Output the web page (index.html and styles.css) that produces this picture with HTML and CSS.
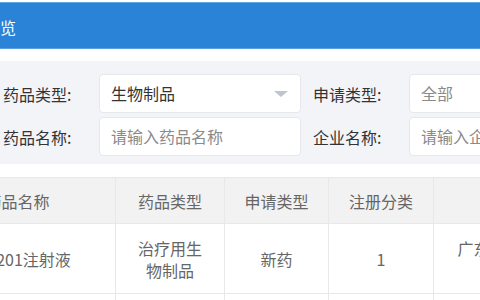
FILE: index.html
```html
<!DOCTYPE html>
<html lang="zh">

<head>
    <meta charset="UTF-8">
    <title>药品一览</title>
    <link rel="stylesheet" href="styles.css">
</head>

<body>
    <div class="topbar">
        <h1 class="title">药品一览</h1>
    </div>

    <div class="filters">
        <div class="field">
            <span class="label">药品类型:</span>
            <div class="input select">生物制品<i class="caret"></i></div>
        </div>
        <div class="field">
            <span class="label">申请类型:</span>
            <div class="input muted">全部</div>
        </div>
        <div class="field">
            <span class="label">药品名称:</span>
            <div class="input muted">请输入药品名称</div>
        </div>
        <div class="field">
            <span class="label">企业名称:</span>
            <div class="input muted">请输入企业名称</div>
        </div>
    </div>

    <table class="list">
        <colgroup>
            <col width="196">
            <col width="109">
            <col width="104">
            <col width="105">
            <col width="240">
        </colgroup>
        <thead>
            <tr>
                <th>药品名称</th>
                <th>药品类型</th>
                <th>申请类型</th>
                <th>注册分类</th>
                <th>企业名称</th>
            </tr>
        </thead>
        <tbody>
            <tr>
                <td>重组201注射液</td>
                <td>治疗用生物制品</td>
                <td>新药</td>
                <td>1</td>
                <td>广东某某生物制药股份有限公司</td>
            </tr>
            <tr>
                <td>注射用重组蛋白</td>
                <td>治疗用生物制品</td>
                <td>新药</td>
                <td>1</td>
                <td>北京某某生物技术有限公司</td>
            </tr>
        </tbody>
    </table>
</body>

</html>
```

FILE: styles.css
```css
* {
    margin: 0;
    padding: 0;
    box-sizing: border-box;
}

html,
body {
    overflow: hidden;
}

body {
    background: #ffffff;
    font-family: "Noto Sans CJK SC", "Liberation Sans", sans-serif;
    color: #333333;
}

.topbar {
    margin-top: 2px;
    height: 47px;
    background: #2a83d6;
    border-top: 1px solid #63a6e4;
    border-bottom: 1px solid #5a9fe0;
    display: flex;
    align-items: center;
    padding-top: 2px;
}

.title {
    margin-left: -48px;
    font-size: 16px;
    font-weight: normal;
    color: #ffffff;
    white-space: nowrap;
}

.filters {
    margin-top: 12px;
    background: #f3f4f8;
    padding: 13px 0 8px 3px;
    display: grid;
    grid-template-columns: 298px 298px;
    column-gap: 12px;
    row-gap: 4px;
}

.field {
    display: flex;
    align-items: center;
}

.label {
    width: 96px;
    flex: none;
    font-size: 16px;
    color: #333333;
}

.input {
    position: relative;
    width: 202px;
    height: 39px;
    background: #ffffff;
    border: 1px solid #e6e8ee;
    border-radius: 4px;
    padding-left: 11px;
    font-size: 16px;
    line-height: 37px;
    color: #333333;
    white-space: nowrap;
    overflow: hidden;
}

.input.muted {
    color: #8a8a8a;
}

.caret {
    position: absolute;
    right: 12px;
    top: 16px;
    width: 0;
    height: 0;
    border-left: 7px solid transparent;
    border-right: 7px solid transparent;
    border-top: 6px solid #c0c4cc;
}

.list {
    margin-top: 13px;
    margin-left: -81px;
    border-collapse: collapse;
    table-layout: fixed;
    width: 754px;
}

.list th,
.list td {
    border: 1px solid #e8e8e8;
    font-size: 16px;
    font-weight: normal;
    color: #666666;
    text-align: center;
    line-height: 22px;
}

.list th {
    height: 46px;
    padding: 0 8px;
    background: #f2f2f2;
}

.list td {
    height: 70px;
    padding: 0 20px;
}
```
